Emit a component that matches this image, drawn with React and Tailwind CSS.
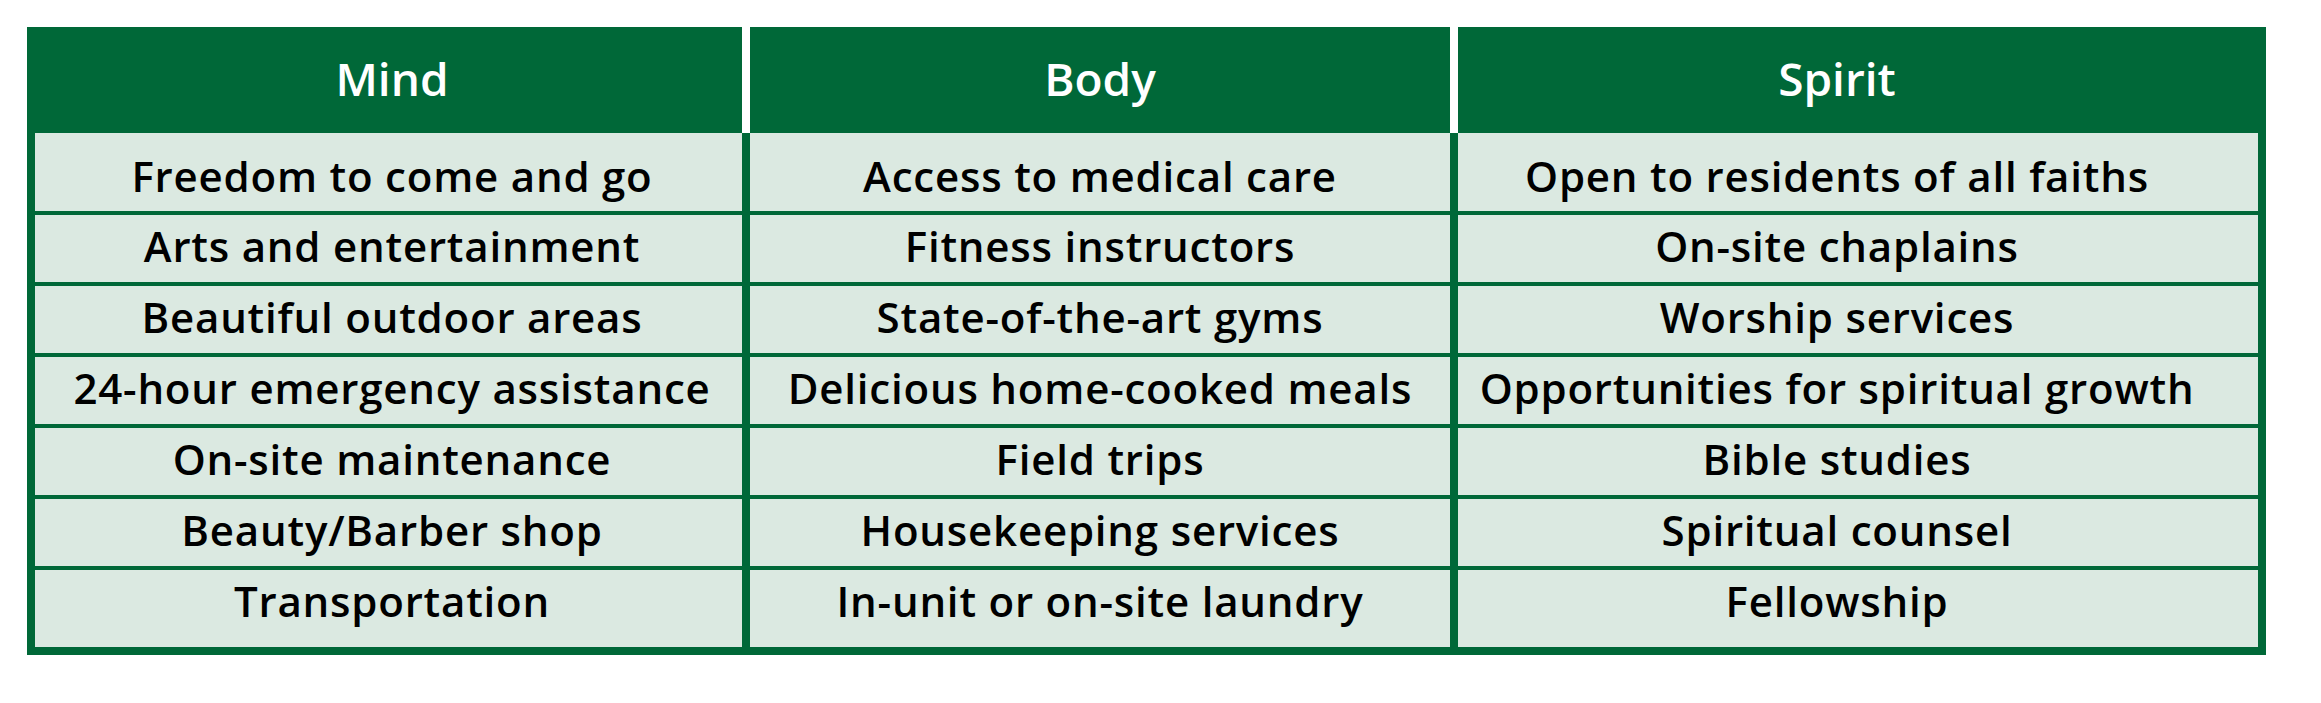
export default function App() {
  const rows = [
    ["Freedom to come and go", "Access to medical care", "Open to residents of all faiths"],
    ["Arts and entertainment", "Fitness instructors", "On-site chaplains"],
    ["Beautiful outdoor areas", "State-of-the-art gyms", "Worship services"],
    ["24-hour emergency assistance", "Delicious home-cooked meals", "Opportunities for spiritual growth"],
    ["On-site maintenance", "Field trips", "Bible studies"],
    ["Beauty/Barber shop", "Housekeeping services", "Spiritual counsel"],
    ["Transportation", "In-unit or on-site laundry", "Fellowship"],
  ];
  const heights = ["h-[78px]", "h-[67px]", "h-[67px]", "h-[67px]", "h-[67px]", "h-[67px]", "h-[77px]"];
  const pads = [
    "pt-[12px] pb-[5px]",
    "pb-[5px]",
    "pb-[5px]",
    "pb-[5px]",
    "pb-[5px]",
    "pb-[5px]",
    "pb-[16px]",
  ];
  const colPads = ["pl-[7px]", "", "pr-[42px]"];
  return (
    <div className="w-[2321px] h-[703px] bg-white pt-[27px] pl-[27px]" style={{ fontFamily: "'Open Sans', Lato, sans-serif" }}>
      <div className="w-[2239px] bg-[#006838] pb-[8px]">
        <div className="grid grid-cols-[715px_8px_700px_8px_808px] h-[106px] text-white text-[46px] font-semibold">
          <div className="flex items-center justify-center pl-[15px] pb-[3px]">Mind</div>
          <div className="bg-white"></div>
          <div className="flex items-center justify-center pb-[3px]">Body</div>
          <div className="bg-white"></div>
          <div className="flex items-center justify-center pr-[50px] pb-[3px]">Spirit</div>
        </div>
        <div className="flex flex-col gap-y-[4px] px-[8px]">
          {rows.map((r, i) => (
            <div key={i} className={`grid grid-cols-[707px_700px_800px] gap-x-[8px] ${heights[i]}`}>
              {r.map((t, j) => (
                <div key={j} className={`bg-[#dbe9e1] flex items-center justify-center text-[42px] tracking-[0.8px] font-semibold text-black leading-none ${pads[i]} ${colPads[j]}`}>
                  {t}
                </div>
              ))}
            </div>
          ))}
        </div>
      </div>
    </div>
  );
}
